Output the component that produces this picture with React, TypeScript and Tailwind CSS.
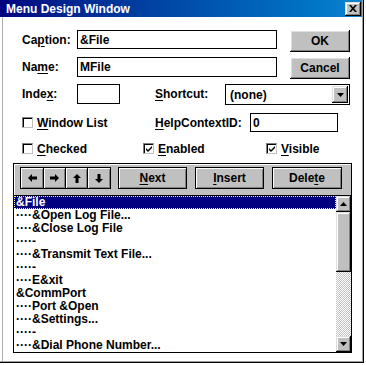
import React from "react";

const BTN =
  "flex items-center justify-center bg-[#c0c0c0] text-black font-bold text-[12px] shadow-[inset_-1px_-1px_0_#000,inset_1px_1px_0_#fff,inset_-2px_-2px_0_#808080,inset_2px_2px_0_#dfdfdf]";
const PBTN =
  "flex items-center justify-center bg-[#c0c0c0] text-black font-bold text-[12px] border border-black shadow-[inset_1px_1px_0_#fff,inset_-1px_-1px_0_#808080]";
const SBTN =
  "flex items-center justify-center bg-[#c0c0c0] shadow-[inset_-1px_-1px_0_#000,inset_1px_1px_0_#dfdfdf,inset_-2px_-2px_0_#808080,inset_2px_2px_0_#fff]";

function U({ children }: { children: React.ReactNode }) {
  return <span className="underline underline-offset-[2px] decoration-1">{children}</span>;
}

function Check({ checked }: { checked?: boolean }) {
  return (
    <div className="w-[11px] h-[11px] shrink-0 bg-white border-t border-l border-[#808080] border-r border-b border-r-[#c0c0c0] border-b-[#c0c0c0] shadow-[inset_1px_1px_0_#000] flex items-center justify-center">
      {checked && (
        <svg width="7" height="7" viewBox="0 0 7 7" className="ml-[1px] mt-[1px]">
          <path d="M0 2 L2 4 L6 0 L6 2 L2 6 L0 4 Z" fill="#000" />
        </svg>
      )}
    </div>
  );
}

function Arrow({ dir }: { dir: "l" | "r" | "u" | "d" }) {
  const paths: Record<string, string> = {
    l: "M0 4 L4 0 V2.5 H9 V5.5 H4 V8 Z",
    r: "M9 4 L5 0 V2.5 H0 V5.5 H5 V8 Z",
    u: "M4 0 L8 4 H5.5 V9 H2.5 V4 H0 Z",
    d: "M4 9 L8 5 H5.5 V0 H2.5 V5 H0 Z",
  };
  const isH = dir === "l" || dir === "r";
  return (
    <svg width={isH ? 9 : 8} height={isH ? 8 : 9} viewBox={isH ? "0 0 9 8" : "0 0 8 9"}>
      <path d={paths[dir]} fill="#000" />
    </svg>
  );
}

const rows = [
  "&File",
  "····&Open Log File...",
  "····&Close Log File",
  "····-",
  "····&Transmit Text File...",
  "····-",
  "····E&xit",
  "&CommPort",
  "····Port &Open",
  "····&Settings...",
  "····-",
  "····&Dial Phone Number...",
];

export default function App() {
  return (
    <div className="w-[366px] h-[365px] bg-white overflow-hidden font-[Liberation_Sans,Arial,sans-serif] text-[12px] font-bold text-black leading-none">
      <div className="w-[364px] h-[363px] border-r border-b border-black">
        <div className="h-full border-r border-b border-[#a0a0a0] flex flex-col">
          {/* Title bar */}
          <div className="h-[17px] shrink-0 flex items-center bg-linear-to-r from-[#000080] to-[#1084d0] pl-[6px] pr-[1px]">
            <span className="text-white text-[12px] font-bold">Menu Design Window</span>
            <div className={`ml-auto w-[16px] h-[14px] ${SBTN}`}>
              <svg width="8" height="7" viewBox="0 0 8 7">
                <path d="M0 0 H2 L4 2.3 L6 0 H8 L5.1 3.5 L8 7 H6 L4 4.7 L2 7 H0 L2.9 3.5 Z" fill="#000" />
              </svg>
            </div>
          </div>

          {/* Body */}
          <div className="flex-1 ml-[2px] border-l border-[#b0b0b0] flex flex-col">
            {/* Caption row */}
            <div className="flex mt-[13px] h-[22px]">
              <div className="ml-[19px] w-[55px] h-[19px] flex items-center">
                Ca<U>p</U>tion:
              </div>
              <div className="w-[200px] h-[19px] border border-black flex items-center pl-[2px]">&amp;File</div>
              <div className={`ml-[13px] w-[60px] h-[22px] ${BTN}`}>OK</div>
            </div>

            {/* Name row */}
            <div className="flex mt-[5px] h-[22px]">
              <div className="ml-[19px] w-[55px] h-[20px] flex items-center">
                Na<U>m</U>e:
              </div>
              <div className="w-[200px] h-[20px] border border-black flex items-center pl-[2px]">MFile</div>
              <div className={`ml-[13px] w-[60px] h-[22px] ${BTN}`}>Cancel</div>
            </div>

            {/* Index row */}
            <div className="flex mt-[5px] h-[21px]">
              <div className="ml-[19px] w-[55px] h-[20px] flex items-center">
                Inde<U>x</U>:
              </div>
              <div className="w-[43px] h-[20px] border border-black" />
              <div className="ml-[35px] w-[70px] h-[20px] flex items-center">
                <U>S</U>hortcut:
              </div>
              <div className="w-[125px] h-[21px] border border-black flex items-center pl-[4px]">
                <span>(none)</span>
                <div className={`ml-auto mr-[1px] w-[16px] h-[17px] ${SBTN}`}>
                  <svg width="7" height="4" viewBox="0 0 7 4">
                    <path d="M0 0 H7 L3.5 4 Z" fill="#000" />
                  </svg>
                </div>
              </div>
            </div>

            {/* Window list / HelpContextID row */}
            <div className="flex mt-[8px] h-[19px]">
              <div className="ml-[19px] w-[133px] h-[19px] flex items-center">
                <Check />
                <span className="ml-[4px]">
                  <U>W</U>indow List
                </span>
              </div>
              <div className="w-[95px] h-[19px] flex items-center">
                <U>H</U>elpContextID:
              </div>
              <div className="w-[88px] h-[19px] border border-black flex items-center pl-[2px]">0</div>
            </div>

            {/* Checkbox row */}
            <div className="flex mt-[11px] h-[11px]">
              <div className="ml-[19px] w-[121px] h-[11px] flex items-center">
                <Check />
                <span className="ml-[4px]">
                  <U>C</U>hecked
                </span>
              </div>
              <div className="w-[123px] h-[11px] flex items-center">
                <Check checked />
                <span className="ml-[4px]">
                  <U>E</U>nabled
                </span>
              </div>
              <div className="h-[11px] flex items-center">
                <Check checked />
                <span className="ml-[4px]">
                  <U>V</U>isible
                </span>
              </div>
            </div>

            {/* Toolbar panel */}
            <div className="ml-[10px] mt-[9px] w-[339px] h-[33px] border border-black bg-[#c0c0c0] shadow-[inset_1px_1px_0_#fff] flex items-start pt-[3px]">
              <div className="ml-[6px] flex">
                <div className={`w-[24px] h-[22px] ${PBTN}`}>
                  <Arrow dir="l" />
                </div>
                <div className={`w-[23px] h-[22px] -ml-px ${PBTN}`}>
                  <Arrow dir="r" />
                </div>
                <div className={`w-[23px] h-[22px] -ml-px ${PBTN}`}>
                  <Arrow dir="u" />
                </div>
                <div className={`w-[24px] h-[22px] -ml-px ${PBTN}`}>
                  <Arrow dir="d" />
                </div>
              </div>
              <div className={`ml-[7px] w-[69px] h-[22px] ${PBTN}`}>
                <U>N</U>ext
              </div>
              <div className={`ml-[8px] w-[69px] h-[22px] ${PBTN}`}>
                <U>I</U>nsert
              </div>
              <div className={`ml-[8px] w-[70px] h-[22px] ${PBTN}`}>
                Dele<U>t</U>e
              </div>
            </div>

            {/* List box */}
            <div className="ml-[10px] w-[339px] h-[157px] border-l border-r border-b border-black flex">
              <div className="flex-1 flex flex-col">
                {rows.map((r, i) => (
                  <div
                    key={i}
                    className={
                      i === 0
                        ? "h-[13px] leading-[11px] pl-[1px] bg-[#000080] text-white border border-dotted border-[#ffff80] whitespace-pre"
                        : "h-[13px] leading-[13px] pl-[2px] whitespace-pre"
                    }
                  >
                    {r}
                  </div>
                ))}
              </div>
              <div className="w-[15px] flex flex-col">
                <div className={`h-[16px] ${SBTN}`}>
                  <svg width="7" height="4" viewBox="0 0 7 4">
                    <path d="M3.5 0 L7 4 H0 Z" fill="#000" />
                  </svg>
                </div>
                <div className={`h-[60px] ${SBTN}`} />
                <div className="flex-1 [background:repeating-conic-gradient(#c0c0c0_0_25%,#fff_0_50%)_0_0/2px_2px]" />
                <div className={`h-[16px] ${SBTN}`}>
                  <svg width="7" height="4" viewBox="0 0 7 4">
                    <path d="M0 0 H7 L3.5 4 Z" fill="#000" />
                  </svg>
                </div>
              </div>
            </div>
          </div>
        </div>
      </div>
    </div>
  );
}
